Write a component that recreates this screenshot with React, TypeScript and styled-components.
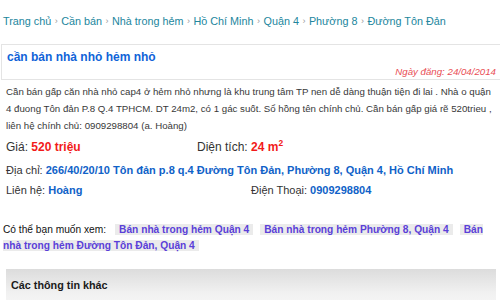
import React from "react";
import styled, { createGlobalStyle } from "styled-components";

const Global = createGlobalStyle`
  html, body { margin: 0; padding: 0; background: #fff; }
  body { font-family: "Liberation Sans", Arial, sans-serif; width: 500px; height: 300px; overflow: hidden; }
`;

const Page = styled.div`
  width: 500px;
  height: 300px;
  overflow: hidden;
`;

const Breadcrumb = styled.nav`
  display: flex;
  align-items: center;
  gap: 3.5px;
  height: 44px;
  padding: 0 0 3px 3px;
  box-sizing: border-box;
  font-size: 10.8px;
  color: #22869d;
  white-space: nowrap;
`;

const Sep = styled.span`
  color: #9a9a9a;
  font-size: 9px;
`;

const TitleBox = styled.div`
  border-top: 1px solid #e4e4e4;
  border-left: 1px solid #e4e4e4;
  border-bottom: 1px solid #e4e4e4;
  margin-left: 1px;
  padding: 5px 4px 1px 5px;
`;

const Title = styled.h1`
  margin: 0;
  font-size: 12px;
  line-height: 15px;
  font-weight: bold;
  color: #1063d8;
`;

const DateLine = styled.div`
  text-align: right;
  font-style: italic;
  font-size: 9.7px;
  line-height: 12px;
  color: #e94e55;
  margin-top: 1px;
`;

const Body = styled.div`
  padding: 3px 6px 0 6px;
`;

const Desc = styled.p`
  margin: 0;
  font-size: 9.7px;
  line-height: 17px;
  color: #383838;
  white-space: nowrap;
`;

const Row = styled.div<{ $size: number; $mt: number; $col: number }>`
  display: grid;
  grid-template-columns: ${(p) => p.$col}px 1fr;
  font-size: ${(p) => p.$size}px;
  line-height: ${(p) => p.$size + 3}px;
  color: #333;
  margin-top: ${(p) => p.$mt}px;
  white-space: nowrap;
`;

const Line = styled.div<{ $size: number; $mt: number }>`
  font-size: ${(p) => p.$size}px;
  line-height: ${(p) => p.$size + 3}px;
  color: #333;
  margin-top: ${(p) => p.$mt}px;
  white-space: nowrap;
`;

const Red = styled.b`
  color: #f21a1a;
`;

const Blue = styled.b`
  color: #1062c8;
`;

const Sup = styled.sup`
  font-size: 0.7em;
  line-height: 0;
`;

const Related = styled.div`
  margin-top: 25px;
  padding-left: 3px;
  font-size: 10.2px;
  line-height: 16px;
  color: #111;
`;

const RelatedLabel = styled.span`
  color: #111;
`;

const Tag = styled.a<{ $first?: boolean }>`
  background: #ebebeb;
  color: #5a3fd8;
  font-weight: bold;
  padding: 0 4px;
  margin-left: ${(p) => (p.$first ? 9 : 7)}px;
  text-decoration: none;
`;

const TagPart = styled.span``;

const Other = styled.div`
  margin: 15px 4px 0 6px;
  height: 40px;
  background: linear-gradient(#dcdcdc, #f1f1f1 60%, #f7f7f7);
  padding: 9px 5px;
  box-sizing: border-box;
  font-size: 10.8px;
  line-height: 14px;
  font-weight: bold;
  color: #1a1a1a;
`;

const crumbs = [
  "Trang chủ",
  "Cần bán",
  "Nhà trong hẻm",
  "Hồ Chí Minh",
  "Quận 4",
  "Phường 8",
  "Đường Tôn Đản",
];

export default function App() {
  return (
    <Page>
      <Global />
      <Breadcrumb>
        {crumbs.map((c, i) => (
          <React.Fragment key={c}>
            {i > 0 && <Sep>›</Sep>}
            <span>{c}</span>
          </React.Fragment>
        ))}
      </Breadcrumb>
      <TitleBox>
        <Title>cần bán nhà nhỏ hẻm nhỏ</Title>
        <DateLine>Ngày đăng: 24/04/2014</DateLine>
      </TitleBox>
      <Body>
        <Desc>
          Cần bán gấp căn nhà nhỏ cap4 ở hẻm nhỏ nhưng là khu trung tâm TP nen dễ dàng thuận tiện đi lai . Nhà o quận
          <br />
          4 đuong Tôn đản P.8 Q.4 TPHCM. DT 24m2, có 1 gác suốt. Sổ hồng tên chính chủ. Cần bán gấp giá rẽ 520trieu ,
          <br />
          liên hệ chính chủ: 0909298804 (a. Hoàng)
        </Desc>
        <Row $size={12} $mt={6} $col={191}>
          <span>
            Giá: <Red>520 triệu</Red>
          </span>
          <span>
            Diện tích: <Red>24 m<Sup>2</Sup></Red>
          </span>
        </Row>
        <Line $size={11} $mt={8}>
          Địa chỉ: <Blue>266/40/20/10 Tôn đản p.8 q.4 Đường Tôn Đản, Phường 8, Quận 4, Hồ Chí Minh</Blue>
        </Line>
        <Row $size={11} $mt={6} $col={245}>
          <span>
            Liên hệ: <Blue>Hoàng</Blue>
          </span>
          <span>
            Điện Thoại: <Blue>0909298804</Blue>
          </span>
        </Row>
      </Body>
      <Related>
        <RelatedLabel>Có thể bạn muốn xem:</RelatedLabel>
        <Tag $first>Bán nhà trong hẻm Quận 4</Tag>
        <Tag>Bán nhà trong hẻm Phường 8, Quận 4</Tag>
        <Tag>
          <TagPart>Bán</TagPart> <TagPart>nhà trong hẻm Đường Tôn Đản, Quận 4</TagPart>
        </Tag>
      </Related>
      <Other>Các thông tin khác</Other>
    </Page>
  );
}
